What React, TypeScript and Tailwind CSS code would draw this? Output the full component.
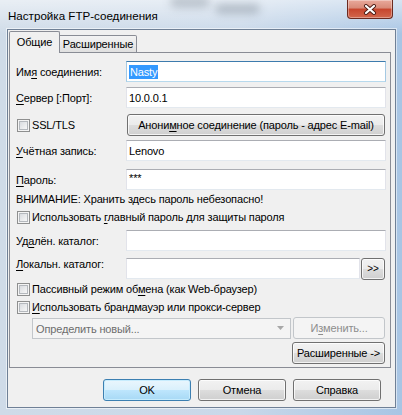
import type { ReactNode } from "react";
import clsx from "clsx";

function Btn({
  children,
  className,
  primary,
  disabled,
}: {
  children: ReactNode;
  className?: string;
  primary?: boolean;
  disabled?: boolean;
}) {
  return (
    <div
      className={clsx(
        "flex shrink-0 items-center justify-center rounded-[3px] border",
        primary &&
          "border-[#3c7fb1] bg-[linear-gradient(#eaf6fd_0%,#d9f0fc_50%,#bee6fd_50%,#a7d9f5_100%)] text-black shadow-[inset_0_0_0_1px_#c7ecfd]",
        disabled && "border-[#c2c6ca] bg-[#f4f4f4] text-[#8d8d8d]",
        !primary &&
          !disabled &&
          "border-[#707070] bg-[linear-gradient(#f2f2f2_0%,#ebebeb_50%,#dddddd_50%,#cfcfcf_100%)] text-black shadow-[inset_0_0_0_1px_rgba(255,255,255,0.75)]",
        className
      )}
    >
      {children}
    </div>
  );
}

function Field({ children, className, focused }: { children?: ReactNode; className?: string; focused?: boolean }) {
  return (
    <div
      className={clsx(
        "flex h-[21px] shrink-0 items-center border bg-white pl-[2px]",
        focused
          ? "border-[#a4c9e3] border-t-[#3d7bad] border-b-[#b7d9ed]"
          : "border-[#e2e3ea] border-t-[#abadb3] border-b-[#e3e9ef]",
        className
      )}
    >
      {children}
    </div>
  );
}

function Check() {
  return (
    <span className="box-border flex h-[13px] w-[13px] shrink-0 border border-[#8e8f8f] bg-[#f4f4f4] p-px">
      <span className="block h-full w-full border border-[#b4b8bd] bg-[linear-gradient(135deg,#d9dce0,#f7f7f7)]" />
    </span>
  );
}

function Row({ label, children, className }: { label: ReactNode; children: ReactNode; className?: string }) {
  return (
    <div className={clsx("flex items-center", className)}>
      <span className="w-[110px] shrink-0">{label}</span>
      {children}
    </div>
  );
}

function CheckRow({ children, className }: { children: ReactNode; className?: string }) {
  return (
    <div className={clsx("flex items-center gap-[2px] pl-px", className)}>
      <Check />
      <span>{children}</span>
    </div>
  );
}

const U = ({ children }: { children: ReactNode }) => <span className="underline underline-offset-[2px]">{children}</span>;

export default function App() {
  return (
    <div className="relative flex h-[415px] w-[402px] flex-col overflow-hidden bg-[linear-gradient(180deg,rgba(255,255,255,0.55),rgba(255,255,255,0)_34px),linear-gradient(90deg,#cfdbe8,#c9d8e9_60%,#a8c5e4)] font-['Liberation_Sans',Arial,sans-serif] text-[11px] leading-[14px] tracking-[-0.15px] text-black">
      {/* blurred desktop showing through the glass */}
      <div className="pointer-events-none absolute left-[170px] top-[-4px] h-[12px] w-[40px] rounded-full bg-[#7f8a96] opacity-40 blur-[4px]" />
      <div className="pointer-events-none absolute left-[215px] top-[4px] h-[10px] w-[45px] rounded-full bg-[#6f7b88] opacity-40 blur-[4px]" />

      <div className="flex h-[29px] shrink-0 items-start">
        <span className="ml-[8px] mt-[8px] text-[11.6px] leading-[15px] tracking-normal">Настройка FTP-соединения</span>
        <div className="ml-auto mr-[9px] flex h-[19px] w-[46px] items-center justify-center rounded-b-[4px] border border-t-0 border-[#6b2a20] bg-[linear-gradient(#e9a99b_0%,#d88a78_45%,#c7452d_50%,#d2674d_100%)] shadow-[inset_0_0_0_1px_rgba(255,255,255,0.35)]">
          <svg width="14" height="11" viewBox="0 0 14 11">
            <path d="M3 2 L11 9 M11 2 L3 9" stroke="#4b1b14" strokeWidth="4" strokeLinecap="round" />
            <path d="M3 2 L11 9 M11 2 L3 9" stroke="#ffffff" strokeWidth="2.2" strokeLinecap="round" />
          </svg>
        </div>
      </div>

      <div className="mb-[7px] ml-[7px] mr-[6px] flex flex-1 flex-col border border-[#6f8096] bg-[#f0f0f0] shadow-[0_0_0_1px_rgba(255,255,255,0.55)]">
        <div className="ml-px mr-[4px] mt-px flex flex-col">
          <div className="relative z-10 -mb-px flex h-[22px] items-end">
            <div className="flex h-[22px] w-[51px] items-center justify-center rounded-t-[2px] border border-b-0 border-[#898c95] bg-[#f0f0f0] pb-[2px]">
              Общие
            </div>
            <div className="flex h-[18px] w-[77px] items-center justify-center rounded-tr-[2px] border-y border-r border-[#898c95] bg-[linear-gradient(#f3f3f3,#e0e0e0)]">
              Расширенные
            </div>
          </div>

          <div className="flex h-[316px] flex-col border border-[#898c95] pl-[6px] pr-[4px]">
            <Row label={<>Им<U>я</U> соединения:</>} className="mt-[8px]">
              <Field focused className="w-[260px]">
                <span className="bg-[#3399ff] px-px text-white">Nasty</span>
              </Field>
            </Row>
            <Row label={<><U>С</U>ервер [:Порт]:</>} className="mt-[5px]">
              <Field className="w-[260px]">10.0.0.1</Field>
            </Row>
            <div className="mt-[6px] flex items-center">
              <div className="flex w-[110px] shrink-0 items-center gap-[2px] pl-px">
                <Check />
                <span>SSL/TLS</span>
              </div>
              <Btn className="ml-px h-[22px] w-[258px]">
                Анони<U>м</U>ное соединение (пароль - адрес E-mail)
              </Btn>
            </div>
            <Row label={<><U>У</U>чётная запись:</>} className="mt-[4px]">
              <Field className="w-[260px]">Lenovo</Field>
            </Row>
            <Row label={<><U>П</U>ароль:</>} className="mt-[8px]">
              <Field className="w-[260px] items-start pt-px">***</Field>
            </Row>
            <div className="mt-px flex h-[16px] items-center">ВНИМАНИЕ: Хранить здесь пароль небезопасно!</div>
            <CheckRow className="mt-[2px] h-[16px]">
              Использовать <U>г</U>лавный пароль для защиты пароля
            </CheckRow>
            <Row label={<>Уд<U>а</U>лён. каталог:</>} className="mt-[5px]">
              <Field className="w-[260px]" />
            </Row>
            <Row label={<><U>Л</U>окальн. каталог:</>} className="mt-[6px] h-[22px] items-start">
              <div className="flex h-[22px] items-center">
                <Field className="w-[234px]" />
              </div>
              <Btn className="ml-[1px] mt-px h-[22px] w-[24px] text-[10px]">&gt;&gt;</Btn>
            </Row>
            <CheckRow className="mt-px h-[18px]">
              Пассивный режим об<U>м</U>ена (как Web-браузер)
            </CheckRow>
            <CheckRow className="h-[18px]">
              <U>И</U>спользовать брандмауэр или прокси-сервер
            </CheckRow>
            <div className="mt-px flex items-start pl-[16px]">
              <div className="relative mt-px flex h-[21px] w-[259px] items-center border border-[#c2c6ca] bg-[#f4f4f4] pl-[3px] text-[#6d6d6d]">
                Определить новый...
                <svg className="absolute right-[6px] top-[7px]" width="7" height="4" viewBox="0 0 7 4">
                  <path d="M0 0 H7 L3.5 4 Z" fill="#a8a8a8" />
                </svg>
              </div>
              <Btn disabled className="ml-[2px] h-[22px] w-[92px]">
                И<U>з</U>менить...
              </Btn>
            </div>
            <Btn className="mr-px mt-[3px] h-[22px] w-[93px] self-end">Расширенные -&gt;</Btn>
          </div>
        </div>

        <div className="ml-[95px] mt-[11px] flex gap-[7px]">
          <Btn primary className="h-[22px] w-[88px]">OK</Btn>
          <Btn className="h-[22px] w-[88px]">Отмена</Btn>
          <Btn className="h-[22px] w-[88px]">Справка</Btn>
        </div>
      </div>
    </div>
  );
}
